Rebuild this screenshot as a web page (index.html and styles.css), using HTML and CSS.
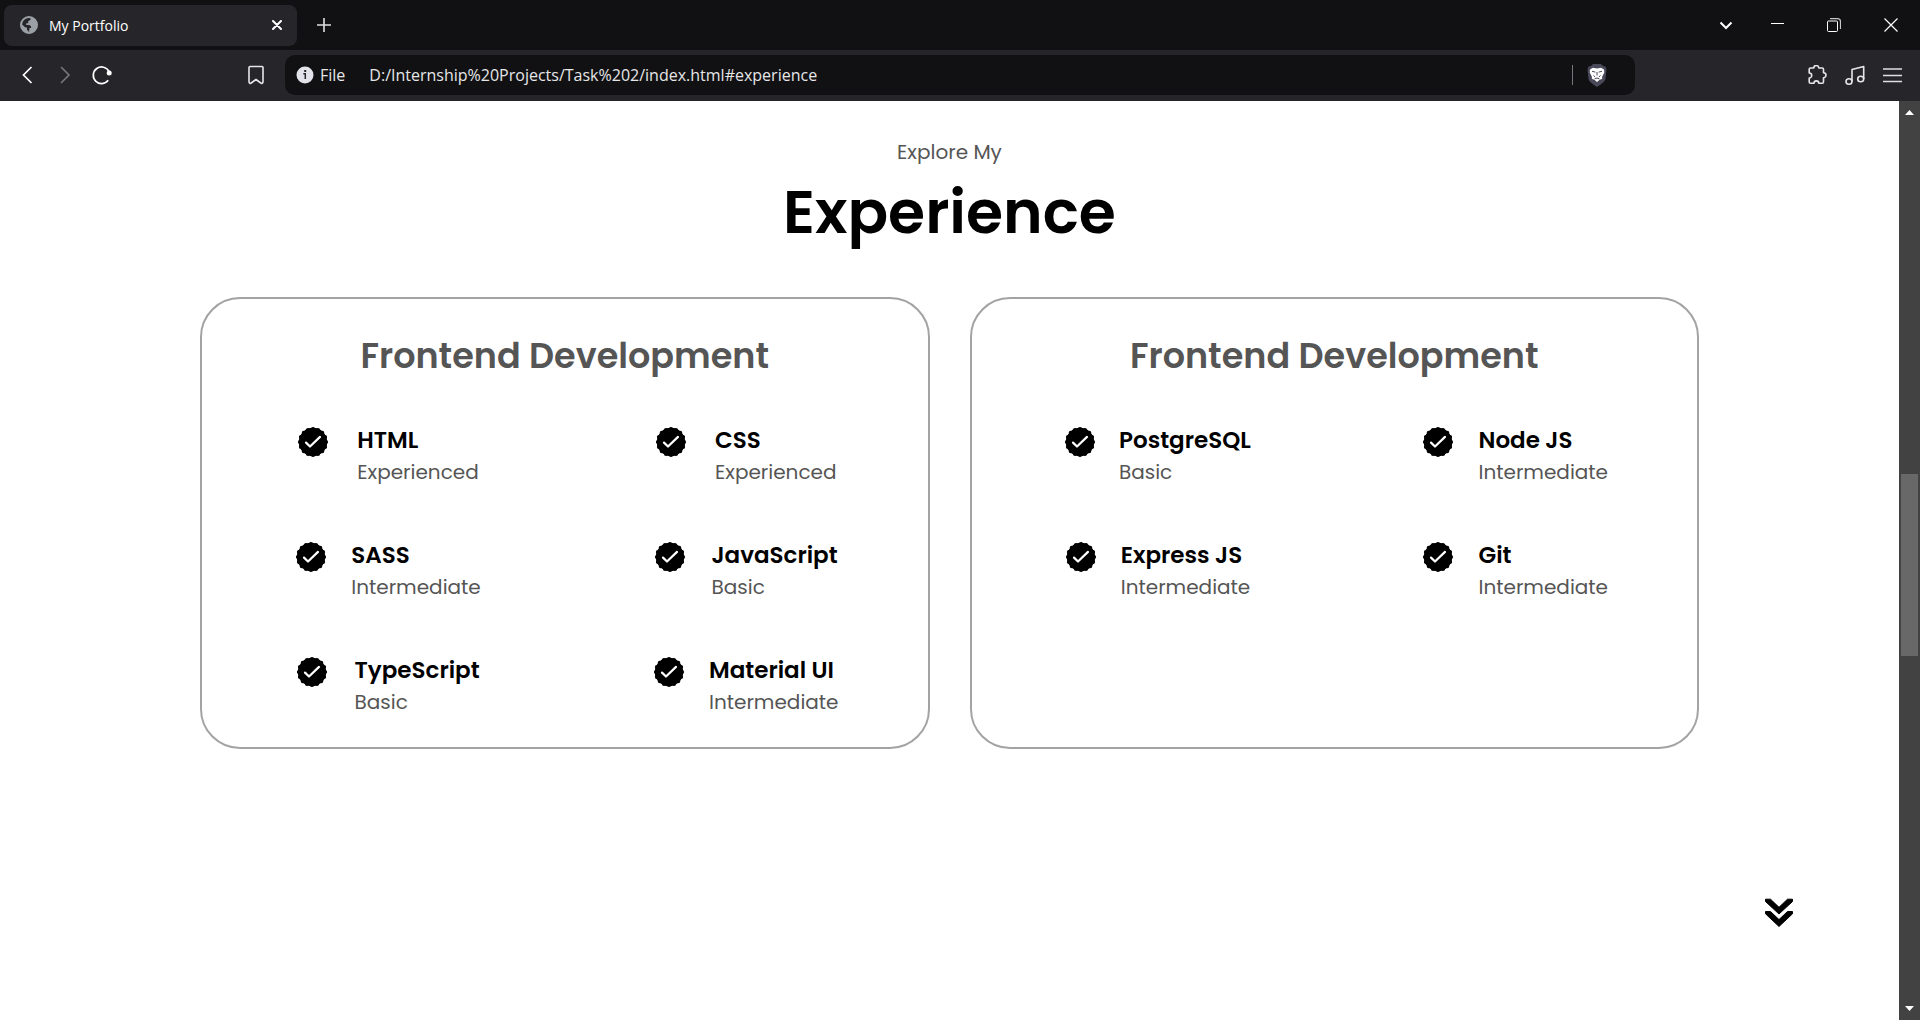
FILE: index.html
```html
<!DOCTYPE html>
<html lang="en">
<head>
<meta charset="utf-8">
<meta name="viewport" content="width=device-width, initial-scale=1">
<title>My Portfolio</title>
<link rel="stylesheet" href="styles.css">
</head>
<body>
<svg class="sprite" aria-hidden="true">
  <symbol id="verified" viewBox="0 0 32 32">
    <circle cx="16" cy="16" r="14.200"/>
    <circle cx="16" cy="16" r="13" fill="none" stroke="#000" stroke-width="4.200" stroke-linecap="round" pathLength="16" stroke-dasharray="0 1"/>
    <path d="M9 16.6l4 3.9 10-9.6" fill="none" stroke="#fff" stroke-width="2.2" stroke-linecap="round" stroke-linejoin="round"/>
  </symbol>
</svg>

<header class="browser">
  <div class="tab-strip">
    <div class="tab">
      <svg class="tab-icon" viewBox="0 0 18 18"><circle cx="9" cy="9" r="8" fill="none" stroke="#9aa0a6" stroke-width="2"/><path d="M10.500 1v2.800L8 5.500l.3 1.800H6.200v1.600h3.300l1.600 1.600v1.600H9.400L9 17c4.500 0 8-3.500 8-8s-3-7.500-6.500-8zM1 7.500l4 3.700 2 .5v2.200l1.500 1V17C4 17 1 13 1 7.500z" fill="#9aa0a6"/></svg>
      <span class="tab-title">My Portfolio</span>
      <button class="icon-button" aria-label="Close tab"><svg width="10" height="10" viewBox="0 0 10 10"><path d="M1 1l8 8M9 1L1 9" stroke="#fff" stroke-width="2" stroke-linecap="round"/></svg></button>
    </div>
    <button class="icon-button new-tab" aria-label="New tab"><svg width="14" height="14" viewBox="0 0 14 14"><path d="M7 0v14M0 7h14" stroke="#e0e0e2" stroke-width="1.600"/></svg></button>
    <button class="icon-button tab-search" aria-label="Search tabs"><svg width="14" height="14" viewBox="0 0 14 14"><path d="M1.500 4.500L7 10l5.500-5.500" fill="none" stroke="#fff" stroke-width="2"/></svg></button>
    <div class="window-controls">
      <button class="icon-button" aria-label="Minimize"><svg width="14" height="14" viewBox="0 0 14 14"><path d="M1 5.500h13" stroke="#fff"/></svg></button>
      <button class="icon-button" aria-label="Restore"><svg width="14" height="14" viewBox="0 0 14 14"><rect x=".5" y="3" width="10" height="10.500" rx="1" fill="none" stroke="#fff"/><path d="M3 .7h7.500a3 3 0 0 1 3 3V11" fill="none" stroke="#c8c8c8" stroke-width="1.200"/></svg></button>
      <button class="icon-button" aria-label="Close window"><svg width="14" height="14" viewBox="0 0 14 14"><path d="M.5 .5l13 13M13.500 .5l-13 13" stroke="#fff" stroke-width="1.200"/></svg></button>
    </div>
  </div>
  <div class="toolbar">
    <div class="navigation">
      <button class="icon-button" aria-label="Back"><svg width="20" height="20" viewBox="0 0 20 20"><path d="M13.500 2L5.500 10l8 8" fill="none" stroke="#fff" stroke-width="1.700"/></svg></button>
      <button class="icon-button" aria-label="Forward"><svg width="20" height="20" viewBox="0 0 20 20"><path d="M6 2l8 8-8 8" fill="none" stroke="#77777b" stroke-width="1.700"/></svg></button>
      <button class="icon-button" aria-label="Reload"><svg width="20" height="20" viewBox="0 0 20 20"><path d="M17 6.500a8.300 8.300 0 1 0-.8 8.800" fill="none" stroke="#fff" stroke-width="1.700"/><circle cx="17.200" cy="8" r="2.500" fill="#fff"/></svg></button>
    </div>
    <button class="icon-button bookmark" aria-label="Bookmark"><svg width="20" height="20" viewBox="0 0 20 20"><path d="M4 1.500h12a1 1 0 0 1 1 1V17a1.300 1.300 0 0 1-2.200 1L10 14.500 5.200 18A1.300 1.300 0 0 1 3 17V2.500a1 1 0 0 1 1-1z" fill="none" stroke="#e6e6e8" stroke-width="1.600" stroke-linejoin="round"/></svg></button>
    <div class="address-bar">
      <button class="site-info"><svg width="18" height="18" viewBox="0 0 18 18"><circle cx="9" cy="9" r="8.500" fill="#e2e2ea"/><path d="M7.300 7.700h2v5.300" fill="none" stroke="#26262a" stroke-width="1.500"/><rect x="8.200" y="4" width="2" height="2" fill="#26262a"/></svg>File</button>
      <input class="address" type="text" aria-label="Address" value="D:/Internship%20Projects/Task%202/index.html#experience">
      <button class="shields" aria-label="Shields"><svg width="20" height="23" viewBox="0 0 20 23"><path d="M6 0h8l2 2 2.500.5 1 3-1 9.500c-.5 3-4.500 5-8.500 8-4-3-8-5-8.500-8l-1-9.500 1-3L4 2z" fill="#484858"/><path d="M3 5.500L6 3.800l4 .7 4-.7 3 1.700.3 3-2.300 4.500.3 1.800-3 1.200-2.300 2-2.300-2-3-1.200.3-1.800L2.700 8.500z" fill="#fff"/><path d="M5 7.300l3.300.8M15 7.300l-3.300.8M6.500 11.500l1.700 1.500M13.500 11.500L11.800 13M7.500 15l2.500-1 2.500 1M10 8v3.500" fill="none" stroke="#484858"/></svg></button>
    </div>
    <div class="tools">
      <button class="icon-button" aria-label="Extensions"><svg width="20" height="20" viewBox="0 0 20 20"><path d="M3.500 3h3.300a2.500 2.500 0 0 1 5 0h3.400c.8 0 1.300.5 1.300 1.300v3.500a2.400 2.400 0 0 1 0 4.900v4.300c0 .8-.5 1.300-1.300 1.300h-3.400a2.400 2.400 0 0 0-4.800 0H3.500c-.8 0-1.300-.5-1.300-1.300v-4a2.500 2.500 0 0 0 0-5V4.300C2.200 3.500 2.700 3 3.500 3z" fill="none" stroke="#e6e6e8" stroke-width="1.600" stroke-linejoin="round"/></svg></button>
      <button class="icon-button" aria-label="Playlist"><svg width="20" height="20" viewBox="0 0 20 20"><path d="M7 16.500V4.500l11.700-3v12.500" fill="none" stroke="#e6e6e8" stroke-width="1.600" stroke-linejoin="round"/><ellipse cx="4" cy="16.500" rx="3" ry="2.700" fill="none" stroke="#e6e6e8" stroke-width="1.600"/><ellipse cx="15.700" cy="14" rx="3" ry="2.700" fill="none" stroke="#e6e6e8" stroke-width="1.600"/></svg></button>
      <button class="icon-button" aria-label="Menu"><svg width="20" height="20" viewBox="0 0 20 20"><path d="M0 4h19M0 10.500h19M0 16.500h19" stroke="#e0e0e2" stroke-width="1.600"/></svg></button>
    </div>
  </div>
</header>

<div class="viewport">
  <main class="page">
    <section class="experience" id="experience">
      <p class="eyebrow">Explore My</p>
      <h1 class="title">Experience</h1>
      <div class="cards">
        <div class="card">
          <h2 class="card-title">Frontend Development</h2>
          <div class="skills">
            <article class="skill"><svg class="skill-icon"><use href="#verified"/></svg><div><h3>HTML</h3><p>Experienced</p></div></article>
            <article class="skill"><svg class="skill-icon"><use href="#verified"/></svg><div><h3>CSS</h3><p>Experienced</p></div></article>
            <article class="skill"><svg class="skill-icon"><use href="#verified"/></svg><div><h3>SASS</h3><p>Intermediate</p></div></article>
            <article class="skill"><svg class="skill-icon"><use href="#verified"/></svg><div><h3>JavaScript</h3><p>Basic</p></div></article>
            <article class="skill"><svg class="skill-icon"><use href="#verified"/></svg><div><h3>TypeScript</h3><p>Basic</p></div></article>
            <article class="skill"><svg class="skill-icon"><use href="#verified"/></svg><div><h3>Material UI</h3><p>Intermediate</p></div></article>
          </div>
        </div>
        <div class="card">
          <h2 class="card-title">Frontend Development</h2>
          <div class="skills">
            <article class="skill"><svg class="skill-icon"><use href="#verified"/></svg><div><h3>PostgreSQL</h3><p>Basic</p></div></article>
            <article class="skill"><svg class="skill-icon"><use href="#verified"/></svg><div><h3>Node JS</h3><p>Intermediate</p></div></article>
            <article class="skill"><svg class="skill-icon"><use href="#verified"/></svg><div><h3>Express JS</h3><p>Intermediate</p></div></article>
            <article class="skill"><svg class="skill-icon"><use href="#verified"/></svg><div><h3>Git</h3><p>Intermediate</p></div></article>
          </div>
        </div>
      </div>
      <a class="next" href="#projects" aria-label="Next section"><svg width="30" height="30" viewBox="0 0 30 30"><path d="M1.500 1.200h5L15 9.300l8.500-8.100h5v2.300L15 16 1.500 3.500zM1.500 13.500h5L15 21.600l8.500-8.100h5v2.300L15 28.500 1.500 15.800z" stroke="#000" stroke-linejoin="round"/></svg></a>
    </section>
  </main>
  <div class="scrollbar" aria-hidden="true">
    <svg class="scroll-arrow" viewBox="0 0 21 21"><path d="M6 14h9l-4.500-5z" fill="#fff"/></svg>
    <div class="space-before"></div>
    <div class="thumb"></div>
    <div class="space-after"></div>
    <svg class="scroll-arrow" viewBox="0 0 21 21"><path d="M6 7h9l-4.500 5z" fill="#fff"/></svg>
  </div>
</div>
</body>
</html>
```
FILE: styles.css
```css
* { box-sizing: border-box; margin: 0; padding: 0; }

body {
  display: flex;
  flex-direction: column;
  min-height: 100vh;
  background: #fff;
  font-family: Poppins, Inter, sans-serif;
}

svg { display: block; flex: none; }
.sprite { position: absolute; width: 0; height: 0; }
button, input { border: 0; background: none; color: inherit; font: inherit; }

/* Browser frame */
.browser { background: #26262a; color: #e6e6e8; font-family: "Segoe UI", "Open Sans", sans-serif; }
.icon-button { display: flex; align-items: center; justify-content: center; width: 20px; height: 20px; }

.tab-strip { display: flex; align-items: center; height: 50px; padding: 0 19px 0 4px; background: #111113; }
.tab { display: flex; align-items: center; gap: 11px; width: 293px; height: 41px; padding: 0 10px 0 16px; border-radius: 8px; background: #26262a; }
.tab-icon { width: 18px; height: 18px; }
.tab-title { flex: 1; color: #fff; font-size: 14px; }
.new-tab { margin-left: 17px; }
.tab-search { margin-left: auto; }
.window-controls { display: flex; gap: 37px; margin-left: 31px; }

.toolbar { display: flex; align-items: center; height: 51px; padding: 0 17px 1px 18px; }
.navigation { display: flex; gap: 17px; }
.bookmark { margin-left: 134px; }
.address-bar { display: flex; align-items: center; flex: 1; height: 40px; margin: 0 172px 0 19px; padding: 0 28px 0 11px; border-radius: 10px; background: #111113; }
.site-info { display: flex; align-items: center; gap: 6px; font-size: 16px; line-height: 20px; }
.address { flex: 1; min-width: 0; margin-left: 24px; font-size: 16px; line-height: 20px; }
.shields { padding: 0 0 0 14px; border-left: 1px solid #77777b; height: 20px; display: flex; align-items: center; }
.tools { display: flex; gap: 18px; }

/* Page */
.viewport { display: flex; flex: 1; }
.page { flex: 1; }
.experience { display: flex; flex-direction: column; padding: 36px 100px 0; }
.eyebrow, .skill p { color: #555; font-size: 20px; }
.eyebrow { line-height: 30px; }
.eyebrow, .title, .card-title { text-align: center; }
.title { font-size: 60px; font-weight: 600; line-height: 90px; }

.cards { display: grid; grid-template-columns: 1fr 1fr; gap: 40px; margin: 40px 100px 0; }
.card { padding: 30px 0; border: 2px solid #a3a3a3; border-radius: 40px; }
.card-title { margin-bottom: 40px; color: #555; font-size: 35px; font-weight: 600; line-height: 53px; }
.skills { display: grid; grid-template-columns: 1fr 1fr; justify-items: center; row-gap: 50px; padding: 0 3px 0 7px; }
.skill { display: flex; justify-content: space-around; gap: 10px; width: 200px; }
.skill-icon { width: 32px; height: 32px; margin-top: 4px; }
.skill h3 { font-size: 23px; font-weight: 600; line-height: 36px; }
.skill p { line-height: 29px; }

.next { align-self: flex-end; margin-top: 149px; padding: 0 5px; }

/* Scrollbar */
.scrollbar { display: flex; flex-direction: column; width: 21px; background: #424242; }
.scroll-arrow { width: 21px; height: 21px; }
.space-before { flex: 352; }
.thumb { flex: 182; margin: 0 2px; background: #686868; }
.space-after { flex: 343; }
```
